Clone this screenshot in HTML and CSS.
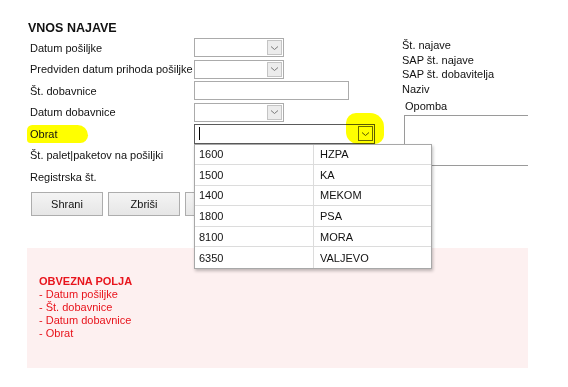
FILE: index.html
```html
<!DOCTYPE html>
<html>
<head>
<meta charset="utf-8">
<link rel="stylesheet" href="styles.css">
</head>
<body>
<div class="page">
  <div class="top">
    <div class="left">
      <h1 class="title">VNOS NAJAVE</h1>
      <div class="form">
        <div class="lbl">Datum pošiljke</div>
        <div class="cell"><div class="sel"><span class="arr"><svg width="9" height="6" viewBox="0 0 9 6"><path d="M1 1.5l3.5 3 3.5-3" fill="none" stroke="#7a7a7a" stroke-width="1"/></svg></span></div></div>
        <div class="lbl">Predviden datum prihoda pošiljke</div>
        <div class="cell"><div class="sel"><span class="arr"><svg width="9" height="6" viewBox="0 0 9 6"><path d="M1 1.5l3.5 3 3.5-3" fill="none" stroke="#7a7a7a" stroke-width="1"/></svg></span></div></div>
        <div class="lbl">Št. dobavnice</div>
        <div class="cell"><div class="txt"></div></div>
        <div class="lbl">Datum dobavnice</div>
        <div class="cell"><div class="sel"><span class="arr"><svg width="9" height="6" viewBox="0 0 9 6"><path d="M1 1.5l3.5 3 3.5-3" fill="none" stroke="#7a7a7a" stroke-width="1"/></svg></span></div></div>
        <div class="lbl"><span class="mark">Obrat</span></div>
        <div class="cell combo-cell">
          <div class="combo"><span class="caret"></span><span class="arr dark"><svg width="9" height="6" viewBox="0 0 9 6"><path d="M1 1.5l3.5 3 3.5-3" fill="none" stroke="#555" stroke-width="1"/></svg></span></div>
          <div class="blob"></div>
          <div class="list">
            <div class="row"><span class="c1">1600</span><span class="c2">HZPA</span></div>
            <div class="row"><span class="c1">1500</span><span class="c2">KA</span></div>
            <div class="row"><span class="c1">1400</span><span class="c2">MEKOM</span></div>
            <div class="row"><span class="c1">1800</span><span class="c2">PSA</span></div>
            <div class="row"><span class="c1">8100</span><span class="c2">MORA</span></div>
            <div class="row"><span class="c1">6350</span><span class="c2">VALJEVO</span></div>
          </div>
        </div>
        <div class="lbl">Št. palet|paketov na pošiljki</div>
        <div class="cell"></div>
        <div class="lbl">Registrska št.</div>
        <div class="cell"></div>
      </div>
      <div class="buttons">
        <button class="btn">Shrani</button>
        <button class="btn">Zbriši</button>
        <button class="btn"></button>
      </div>
    </div>
    <div class="right">
      <div class="info">Št. najave</div>
      <div class="info">SAP št. najave</div>
      <div class="info">SAP št. dobavitelja</div>
      <div class="info">Naziv</div>
      <div class="note-lbl">Opomba</div>
      <div class="note"></div>
    </div>
  </div>
  <div class="req">
    <div class="req-title">OBVEZNA POLJA</div>
    <div>- Datum pošiljke</div>
    <div>- Št. dobavnice</div>
    <div>- Datum dobavnice</div>
    <div>- Obrat</div>
  </div>
</div>
</body>
</html>
```
FILE: styles.css
```css
* { box-sizing: border-box; }
html, body { margin: 0; padding: 0; background: #fff; }
body {
  font-family: "Liberation Sans", Arial, sans-serif;
  font-size: 11px;
  color: #111;
}
.page { padding: 20px 0 0 27px; width: 568px; }
.top { display: flex; }
.left { width: 375px; }
.title {
  margin: 0 0 0 1px;
  font-size: 12.5px;
  font-weight: bold;
  line-height: 16px;
  height: 17px;
}
.form {
  display: grid;
  grid-template-columns: 167px 181px;
  grid-auto-rows: 21.5px;
}
.lbl {
  padding-left: 3px;
  display: flex;
  align-items: center;
  white-space: nowrap;
}
.cell { display: flex; align-items: center; position: relative; }
.sel {
  width: 90px; height: 19px;
  border: 1px solid #ababab;
  background: #fff;
  display: flex; justify-content: flex-end; align-items: center;
  padding-right: 1px;
}
.arr {
  width: 15px; height: 15px;
  background: #ececec;
  border: 1px solid #c4c4c4;
  display: flex; align-items: center; justify-content: center;
}
.arr.dark { border-color: #6a6a2a; background: transparent; }
.txt { width: 155px; height: 19px; border: 1px solid #ababab; }
.mark {
  background: #ffff00;
  border-radius: 6px 12px 9px 4px;
  padding: 3px 30px 3px 3px;
  margin-left: -3px;
}
.combo {
  width: 182px; height: 20px;
  border: 1px solid #5a5a5a;
  display: flex; align-items: center; justify-content: space-between;
  padding: 0 1px 0 4px;
  position: relative; z-index: 1;
}
.caret { width: 1px; height: 13px; background: #000; }
.blob {
  position: absolute;
  left: 152px; top: -10px;
  width: 38px; height: 31px;
  background: #ffff00;
  border-radius: 10px 14px 9px 12px;
  mix-blend-mode: multiply;
  z-index: 2;
}
.list {
  position: absolute;
  left: 0; top: 20.5px;
  width: 238px;
  background: #fff;
  border: 1px solid #a8a8a8;
  box-shadow: 1px 2px 3px rgba(0,0,0,0.25);
  z-index: 3;
}
.row {
  display: flex;
  height: 20.6px;
  border-bottom: 1px solid #dcdcdc;
}
.row:last-child { border-bottom: none; }
.c1 { width: 119px; padding-left: 4px; border-right: 1px solid #dcdcdc; display: flex; align-items: center; }
.c2 { padding-left: 6px; display: flex; align-items: center; }
.buttons { display: flex; gap: 5px; margin: 4px 0 0 4px; }
.btn {
  width: 72px; height: 24px;
  font: inherit; font-size: 11px;
  color: #111;
  border: 1px solid #adadad;
  background: linear-gradient(#f4f4f4, #e6e6e6);
  padding: 0;
}
.right { padding: 18px 0 0 0; width: 126px; }
.info { line-height: 14.5px; white-space: nowrap; }
.note-lbl { margin: 4px 0 0 3px; line-height: 13px; }
.note {
  margin: 2px 0 0 2px;
  width: 124px; height: 51px;
  border: 1px solid #9a9a9a;
  border-right: none;
}
.req {
  margin-top: 32px;
  width: 501px; height: 120px;
  background: #fdf0f0;
  color: #e8141c;
  padding: 27px 0 0 12px;
  line-height: 13px;
}
.req-title { font-weight: bold; }
```
